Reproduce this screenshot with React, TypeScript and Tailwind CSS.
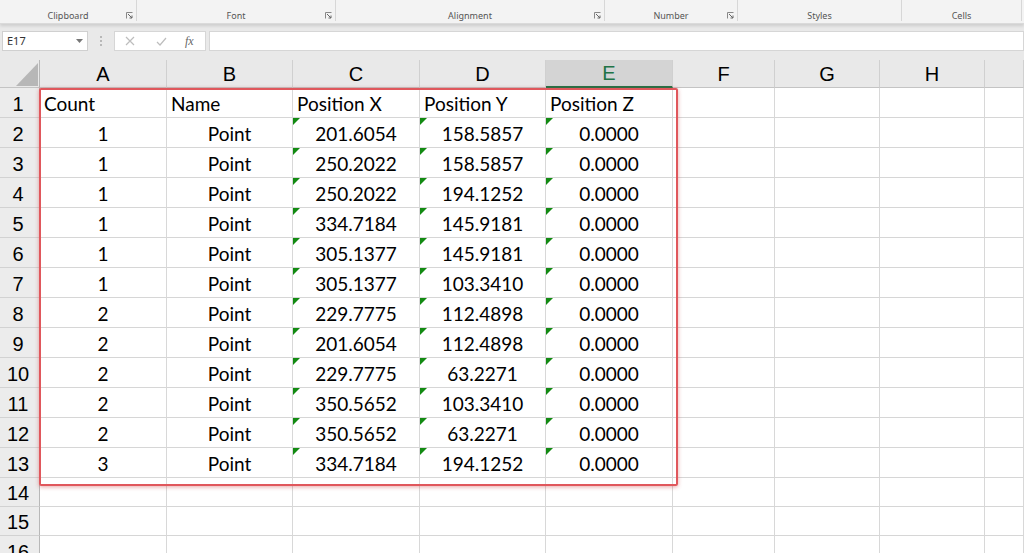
import React from 'react';

const cols = ['A', 'B', 'C', 'D', 'E', 'F', 'G', 'H', ''];

const data = [
  ['1', '201.6054', '158.5857'],
  ['1', '250.2022', '158.5857'],
  ['1', '250.2022', '194.1252'],
  ['1', '334.7184', '145.9181'],
  ['1', '305.1377', '145.9181'],
  ['1', '305.1377', '103.3410'],
  ['2', '229.7775', '112.4898'],
  ['2', '201.6054', '112.4898'],
  ['2', '229.7775', '63.2271'],
  ['2', '350.5652', '103.3410'],
  ['2', '350.5652', '63.2271'],
  ['3', '334.7184', '194.1252'],
];

const gridCols = 'grid grid-cols-[40px_127px_126px_127px_126px_127px_102px_105px_105px_1fr]';

const Flag = () => (
  <span className="absolute left-0 top-0 w-0 h-0 border-t-[7px] border-t-[#128a12] border-r-[7px] border-r-transparent" />
);

const Cell = ({ children, align = 'center', flag = false }: any) => (
  <div
    className={`relative min-h-0 overflow-hidden bg-white border-r border-b border-r-[#d8d8d8] border-b-[#d6d6d6] flex items-center text-[19px] leading-[22px] text-black ${
      align === 'left' ? 'justify-start pl-[4px]' : 'justify-center'
    }`}
    style={{ fontFamily: 'Lato, "Noto Sans", sans-serif' }}
  >
    {flag && <Flag />}
    <span className="pt-[2px]">{children}</span>
  </div>
);

const RowHead = ({ n }: { n: number }) => (
  <div
    className="min-h-0 bg-[#ececec] border-r border-b border-r-[#b8b8b8] border-b-[#d2d2d2] flex items-center justify-center pr-[3px] text-[20px] leading-[22px] text-black"
    style={{ fontFamily: '"Liberation Sans", Arial, sans-serif' }}
  >
    <span className="pt-[2px]">{n}</span>
  </div>
);

const Ribbon = () => {
  const groups = [
    { label: 'Clipboard', w: 'w-[137px]', launcher: true },
    { label: 'Font', w: 'w-[199px]', launcher: true },
    { label: 'Alignment', w: 'w-[269px]', launcher: true },
    { label: 'Number', w: 'w-[133px]', launcher: true },
    { label: 'Styles', w: 'w-[164px]', launcher: false },
    { label: 'Cells', w: 'w-[120px]', launcher: false },
  ];
  return (
    <div className="h-[24px] bg-[#f3f3f3] flex shadow-[0_2px_3px_rgba(0,0,0,0.12)] relative z-10 border-b border-[#dadada]">
      {groups.map((g) => (
        <div key={g.label} className={`${g.w} h-[21px] relative flex items-end justify-center border-r border-[#d7d7d7]`}>
          <span className="text-[9px] leading-[12px] text-[#555] translate-y-[1px]" style={{ fontFamily: '"Noto Sans", sans-serif' }}>{g.label}</span>
          {g.launcher && (
            <svg className="absolute right-[3px] bottom-[2px]" width="7" height="7" viewBox="0 0 7 7">
              <path d="M0.5 6.5V0.5H6.5" fill="none" stroke="#888" strokeWidth="1" />
              <path d="M2 2L6 6M3.5 6H6V3.5" fill="none" stroke="#666" strokeWidth="1" />
            </svg>
          )}
        </div>
      ))}
      <div className="flex-1" />
    </div>
  );
};

const FormulaBar = () => (
  <div className="h-[36px] bg-[#e9e9e9] flex items-start pt-[7px] gap-0">
    <div className="ml-[2px] w-[86px] h-[20px] bg-white border border-[#d0d0d0] flex items-center justify-between px-[4px]">
      <span className="text-[11px] text-[#333]" style={{ fontFamily: '"Noto Sans", sans-serif' }}>E17</span>
      <svg width="7" height="4" viewBox="0 0 7 4"><path d="M0 0H7L3.5 4Z" fill="#777" /></svg>
    </div>
    <div className="w-[26px] h-[20px] flex flex-col items-center justify-center gap-[2px]">
      <span className="w-[2px] h-[2px] bg-[#b8b8b8]" />
      <span className="w-[2px] h-[2px] bg-[#b8b8b8]" />
      <span className="w-[2px] h-[2px] bg-[#b8b8b8]" />
    </div>
    <div className="w-[92px] h-[20px] bg-white border border-[#d6d6d6] flex items-center">
      <svg className="ml-[10px]" width="10" height="10" viewBox="0 0 10 10">
        <path d="M1 1L9 9M9 1L1 9" stroke="#bdbdbd" strokeWidth="1.2" />
      </svg>
      <svg className="ml-[21px]" width="11" height="9" viewBox="0 0 11 9">
        <path d="M1 5L4 8L10 1" fill="none" stroke="#bdbdbd" strokeWidth="1.2" />
      </svg>
      <span className="ml-[18px] text-[12px] italic text-[#666]" style={{ fontFamily: '"Liberation Serif", serif' }}>fx</span>
    </div>
    <div className="ml-[3px] flex-1 h-[20px] bg-white border border-[#d6d6d6]" />
  </div>
);

const Row = ({ h = 'h-[30px]', children }: any) => (
  <div className={`${gridCols} grid-rows-[100%] ${h}`}>{children}</div>
);

const Empty = () => (
  <>
    <Cell />
    <Cell />
    <Cell />
    <Cell />
  </>
);

export default function App() {
  return (
    <div className="w-[1024px] h-[553px] overflow-hidden bg-white relative">
      <Ribbon />
      <FormulaBar />
      <div className="relative">
        <div className={`${gridCols} grid-rows-[100%] h-[28px] bg-[#e9e9e9]`}>
          <div className="relative border-r border-b border-r-[#b8b8b8] border-b-[#c4c4c4]">
            <svg className="absolute left-[16px] top-[3px]" width="22" height="23" viewBox="0 0 22 23">
              <path d="M22 0V23H0Z" fill="#b7b7b7" />
            </svg>
          </div>
          {cols.map((c, i) => (
            <div
              key={i}
              className={`min-h-0 flex items-center justify-center text-[20px] leading-[22px] border-r border-r-[#d0d0d0] ${
                c === 'E'
                  ? 'bg-[#d4d4d4] text-[#217346] border-b-2 border-b-[#217346]'
                  : 'text-black border-b border-b-[#c4c4c4]'
              }`}
              style={{ fontFamily: '"Liberation Sans", Arial, sans-serif' }}
            >
              {c}
            </div>
          ))}
        </div>

        <Row>
          <RowHead n={1} />
          <Cell align="left">Count</Cell>
          <Cell align="left">Name</Cell>
          <Cell align="left">Position X</Cell>
          <Cell align="left">Position Y</Cell>
          <Cell align="left">Position Z</Cell>
          <Empty />
        </Row>

        {data.map((r, i) => (
          <Row key={i}>
            <RowHead n={i + 2} />
            <Cell>{r[0]}</Cell>
            <Cell>Point</Cell>
            <Cell flag>{r[1]}</Cell>
            <Cell flag>{r[2]}</Cell>
            <Cell flag>0.0000</Cell>
            <Empty />
          </Row>
        ))}

        {[14, 15, 16].map((n) => (
          <Row key={n} h={n === 16 ? 'h-[30px]' : 'h-[29px]'}>
            <RowHead n={n} />
            <Cell />
            <Cell />
            <Cell />
            <Cell />
            <Cell />
            <Empty />
          </Row>
        ))}

        <div className="absolute left-[39px] top-[28px] w-[639px] h-[398px] border-2 border-[#e0575c] rounded-[2px] shadow-[0_1px_4px_rgba(200,60,60,0.45)] pointer-events-none" />
      </div>
    </div>
  );
}
